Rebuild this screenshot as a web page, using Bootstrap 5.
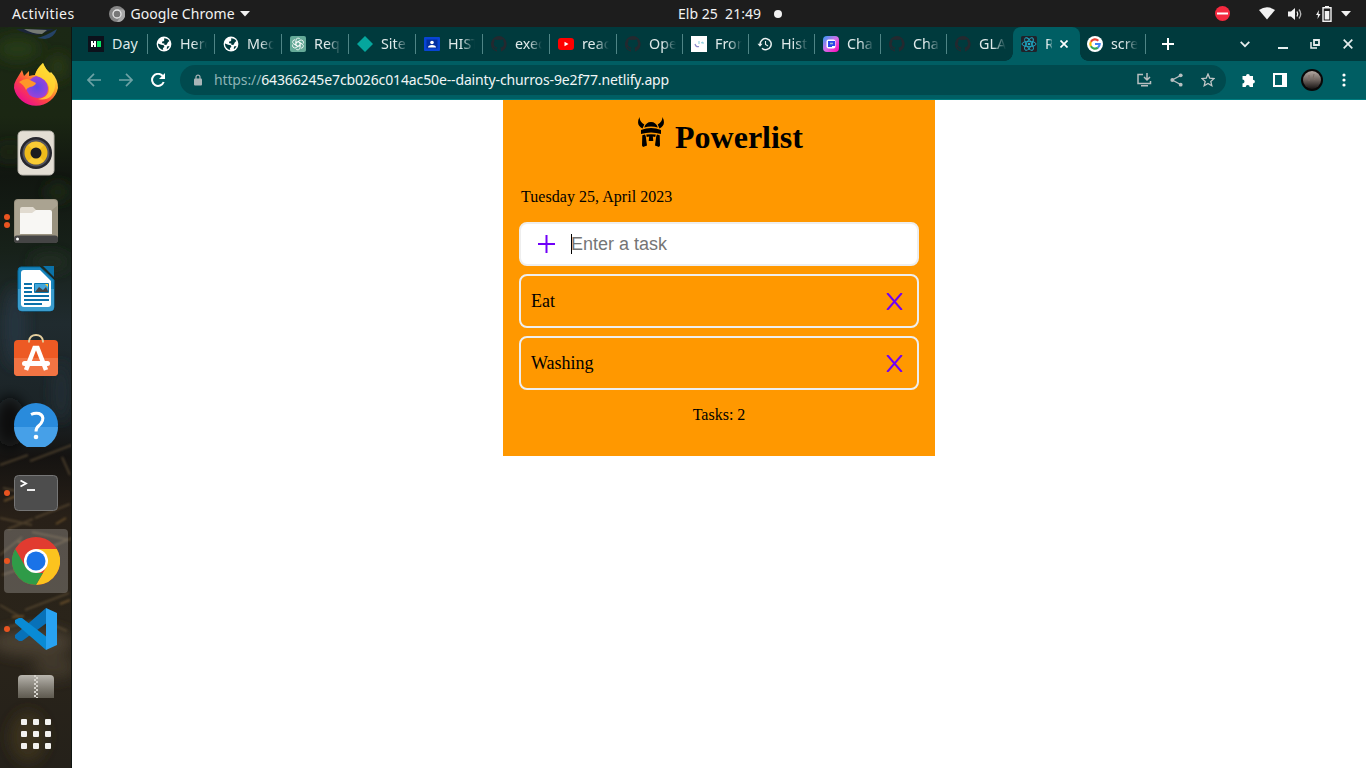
<!DOCTYPE html>
<html lang="en">
<head>
<meta charset="utf-8">
<meta name="viewport" content="width=device-width, initial-scale=1">
<title>Powerlist</title>
<link href="https://cdn.jsdelivr.net/npm/bootstrap@5.3.0/dist/css/bootstrap.min.css" rel="stylesheet">
<style>
  body { font-family: "Noto Sans", "Open Sans", sans-serif; font-size: 14px; line-height: 20px; background: #fff; }
  svg { display: block; flex: none; }
  .topbar { height: 27px; background: #1d1d1d; color: #f2f2f2; }
  .topbar-left { width: 678px; padding-left: 12px; }
  .topbar-clock { width: 105px; }
  .topbar-clock span { white-space: pre; letter-spacing: .02px; }
  .dock { width: 72px; background: #16180f; overflow: hidden; }
  .dock-photo { position: absolute; left: 0; top: 0; }
  .dock-item { height: 68px; flex: none; }
  .dock-running::before { content: ""; position: absolute; left: 4px; top: 31px; width: 6px; height: 6px; border-radius: 50%; background: #e95420; }
  .dock-double::before { top: 27px; box-shadow: 0 8px 0 #e95420; }
  .dock-focus { width: 64px; height: 64px; border-radius: 4px; background: rgba(255,255,255,.22); }
  .strip { background: #003a3d; height: 34px; padding-left: 9px; color: #dfeaea; font-size: 14.3px; }
  .tab-cell { width: 66px; height: 34px; padding-left: 8px; flex: none; }
  .tab-cell:nth-child(-n+8) { width: 67px; }
  .tab-cell:first-child { padding-left: 7px; }
  .tab-cell.sep { background: linear-gradient(#4f8586,#4f8586) right 0 center / 1px 20px no-repeat; }
  .tab-label { width: 27px; margin-left: 8px; overflow: hidden; white-space: nowrap; -webkit-mask-image: linear-gradient(90deg,#000 50%,transparent); mask-image: linear-gradient(90deg,#000 50%,transparent); }
  .tab-label.whole { width: auto; -webkit-mask-image: none; mask-image: none; }
  .tab-cell.tab-open { background: #005e63; border-radius: 8px 8px 0 0; width: 67px; }
  .tab-open .tab-label { width: 7px; -webkit-mask-image: linear-gradient(90deg,#000 40%,rgba(0,0,0,.3)); mask-image: linear-gradient(90deg,#000 40%,rgba(0,0,0,.3)); }
  .tab-open::before, .tab-open::after { content: ""; position: absolute; bottom: 0; width: 8px; height: 8px; }
  .tab-open::before { left: -8px; background: radial-gradient(circle at 0 0, transparent 7.5px, #005e63 8px); }
  .tab-open::after { right: -8px; background: radial-gradient(circle at 100% 0, transparent 7.5px, #005e63 8px); }
  .toolbar { height: 39px; background: #005e63; border-bottom: 1px solid #007c80; padding: 0 6px; }
  .slot { width: 32px; height: 30px; flex: none; display: flex; align-items: center; justify-content: center; }
  .omnibox { height: 30px; background: #004a4e; border-radius: 15px; margin: 0 6px; padding: 0 2px; color: #f1f6f6; white-space: nowrap; }
  .url-text { letter-spacing: -.13px; }
  .url-text span { color: #8db3b5; }
  .app-panel { width: 432px; height: 356px; background: #ff9800; color: #000; font-family: "Liberation Serif", serif; padding: 0 16px; }
  .app-title { font-size: 32px; font-weight: 700; line-height: 37px; margin: 2px 0 0; }
  .app-head { height: 74px; padding: 17px 0 0 3px; }
  .app-date { font-size: 16px; line-height: 18px; margin: 14px 0 16px 2px; letter-spacing: .04px; }
  .entry { height: 44px; border: 2px solid #eee; border-radius: 8px; background: #fff; padding-left: 17px; }
  .entry input { border: 0; outline: 0; padding: 0; width: 320px; margin-left: -1px; font: 18px "Liberation Sans", sans-serif; color: #000; background: transparent; }
  .entry input::placeholder { color: #757575; opacity: 1; }
  .text-caret { width: 1px; height: 20px; background: #000; margin-left: 16px; }
  .task { height: 54px; border: 2px solid #eee; border-radius: 8px; margin-top: 8px; padding: 0 14px 0 10px; font-size: 18px; }
  .tally { font-size: 16px; line-height: 18px; margin-top: 16px; }
</style>
</head>
<body class="vh-100 overflow-hidden d-flex flex-column">
<svg width="0" height="0" class="position-absolute">
  <defs>
    <symbol id="cat" viewBox="0 0 16 16"><path fill="#24292f" d="M8 0a8 8 0 0 0-2.5 15.600c.4.100.5-.2.5-.4v-1.500c-2 .4-2.600-.5-2.800-1-.1-.2-.5-.9-.8-1.100-.3-.2-.7-.6 0-.6.600 0 1.100.6 1.200.8.700 1.200 1.900.9 2.300.7.100-.5.300-.9.500-1.100-1.800-.2-3.600-.9-3.600-4 0-.9.300-1.600.8-2.100-.1-.2-.4-1 .1-2.100 0 0 .7-.2 2.200.8a7.500 7.500 0 0 1 4 0c1.500-1 2.200-.8 2.200-.8.500 1.100.200 1.900.100 2.100.500.600.800 1.300.800 2.100 0 3.100-1.900 3.800-3.600 4 .3.200.5.700.5 1.500v2.200c0 .2.100.5.500.4A8 8 0 0 0 8 0Z"/></symbol>
    <symbol id="globe" viewBox="0 0 16 16"><circle cx="8" cy="8" r="7.400" fill="#fff"/><path fill="#003a3d" d="M8.200 2.200c2.300 0 4 1 5.200 2.800l-1.500 1.200-1.300 2.600-2.100.3-.2-1.600-2-.3-.4-1.500 2.200-.8.100-1.600zM2 7.400l3.200 1.300 2.600.6.600 1.600-1.500 1 .3 1.900C4.200 13.300 1.900 11 2 7.400zM11 10.500l2.500-.6c-.6 1.600-1.500 2.500-2.700 3.200z"/></symbol>
    <symbol id="cross" viewBox="0 0 17 17"><path d="M1.200 0 15.800 17M15.800 0 1.200 17" stroke="#7000f8" stroke-width="2" fill="none"/></symbol>
  </defs>
</svg>

<header class="topbar d-flex align-items-center flex-shrink-0">
  <div class="topbar-left d-flex align-items-center flex-shrink-0">
    <span style="letter-spacing:.42px">Activities</span>
    <svg width="16" height="16" viewBox="0 0 16 16" style="margin-left:34px"><circle cx="8" cy="8" r="8" fill="#858585"/><path d="M8 3.500H15A8 8 0 0 1 8 16l3.500-5.500z" fill="#aaa"/><circle cx="8" cy="8" r="4" fill="#777" stroke="#e8e8e8" stroke-width="1.300"/></svg>
    <span style="margin-left:6px;letter-spacing:.06px">Google Chrome</span>
    <svg width="10" height="6" viewBox="0 0 10 6" style="margin-left:5px"><path d="M0 0h10L5 5.500z" fill="#f2f2f2"/></svg>
  </div>
  <div class="topbar-clock d-flex align-items-center flex-shrink-0"><span>Elb 25  21:49</span><svg class="ms-auto" width="8" height="8" style="margin-right:1px"><circle cx="4" cy="4" r="4" fill="#f2f2f2"/></svg></div>
  <div class="flex-grow-1 d-flex align-items-center justify-content-end" style="padding-right:15px">
    <svg width="15" height="15"><circle cx="7.500" cy="7.500" r="7.500" fill="#f5293f"/><path d="M2 7.500h11" stroke="#fff" stroke-width="2"/></svg>
    <svg width="16" height="13" viewBox="0 0 16 13" style="margin-left:29px"><path d="M0 3Q8-2.500 16 3L8 12.500z" fill="#f2f2f2"/></svg>
    <svg width="16" height="14" viewBox="0 0 16 14" style="margin-left:13px"><path d="M0 4.500h3L7 1v12L3 9.500H0z" fill="#f2f2f2"/><path d="M9 4.500q1.500 2.500 0 5" stroke="#f2f2f2" fill="none" stroke-width="1.300"/><path d="M11 2.500q3.500 4.500 0 9" stroke="#b5b5b5" fill="none" stroke-width="1.300"/></svg>
    <svg width="16" height="16" viewBox="0 0 16 16" style="margin-left:12px"><path d="M3 4 0 9h2l-.5 4L4.500 8h-2z" fill="#f2f2f2"/><path d="M9 0h4v2H9z" fill="#f2f2f2"/><path d="M7 1.700h8v13.600H7z" fill="none" stroke="#f2f2f2" stroke-width="1.400"/><path d="M8.700 5h4.600v8.500H8.700z" fill="#f2f2f2"/></svg>
    <svg width="10" height="6" viewBox="0 0 10 6" style="margin-left:9px"><path d="M0 0h10L5 5.500z" fill="#f2f2f2"/></svg>
  </div>
</header>

<div class="d-flex flex-grow-1 overflow-hidden">
<nav class="dock position-relative d-flex flex-column align-items-center flex-shrink-0">
  <svg class="dock-photo" width="72" height="741" viewBox="0 0 72 741">
    <defs><linearGradient id="ph" x2="0" y2="1"><stop stop-color="#1b2815"/><stop offset=".12" stop-color="#1b2713"/><stop offset=".2" stop-color="#111610"/><stop offset=".3" stop-color="#172119"/><stop offset=".4" stop-color="#202b2f"/><stop offset=".52" stop-color="#1b2326"/><stop offset=".58" stop-color="#151311"/><stop offset=".66" stop-color="#282018"/><stop offset=".8" stop-color="#2a241a"/><stop offset="1" stop-color="#25211a"/></linearGradient><filter id="soft" x="-30%" width="160%"><feGaussianBlur stdDeviation="7"/></filter><filter id="soft2"><feGaussianBlur stdDeviation=".9"/></filter></defs>
    <path fill="url(#ph)" d="M0 0h72v741H0z"/>
    <g filter="url(#soft)"><ellipse cx="18" cy="22" rx="22" ry="12" fill="#263a12"/><ellipse cx="58" cy="40" rx="10" ry="13" fill="#293a14"/><ellipse cx="10" cy="125" rx="16" ry="8" fill="#1c2819"/><ellipse cx="58" cy="165" rx="13" ry="9" fill="#1c2a18"/><ellipse cx="50" cy="235" rx="20" ry="9" fill="#202e20"/><ellipse cx="15" cy="300" rx="10" ry="40" fill="#263640"/><ellipse cx="61" cy="365" rx="8" ry="30" fill="#232f34"/><ellipse cx="10" cy="395" rx="15" ry="25" fill="#0f1011"/><ellipse cx="32" cy="615" rx="42" ry="14" fill="#4a4030"/><ellipse cx="55" cy="640" rx="22" ry="12" fill="#40382a"/><ellipse cx="28" cy="710" rx="18" ry="25" fill="#3b321a"/></g>
    <g filter="url(#soft2)" fill="none" stroke="#655338" stroke-width="2" opacity=".6"><path d="M0 438l28-10M30 434l42-16M3 461l26 6M0 491l32 7M35 491l35-14M8 502l25-10M0 528l22-18M32 505l38 8M44 523l28-12M62 430l8 18M2 548l30-10M0 578l19 11M25 583l44-17M42 593l25 11M8 600l24-6"/><path stroke="#8c6835" d="M18 515l16 3M4 474l12-5M56 497l10-6M60 577l10-4M12 590l12-1"/></g>
    <path fill="#101511" d="M71 0h1v741h-1z"/>
    <path d="M16 2q8 5 22 6l16-6z" fill="#1b2538"/><path d="M24 2l23 1-5 4q-10 0-18-5z" fill="#757a74"/><path d="M37 11q9-2 20-9-3 9-12 10z" fill="#254367"/>
  </svg>
  <div class="position-relative flex-shrink-0" style="height:24px"></div>
  <div class="dock-item w-100 position-relative d-flex align-items-center justify-content-center">
    <svg width="46" height="48" viewBox="0 0 46 48"><defs><linearGradient id="ff" x1=".85" y1=".1" x2=".2" y2=".9"><stop stop-color="#fff44f"/><stop offset=".35" stop-color="#ffa52a"/><stop offset=".65" stop-color="#ff4740"/><stop offset="1" stop-color="#ec108c"/></linearGradient><radialGradient id="fp"><stop stop-color="#5a4ae8"/><stop offset="1" stop-color="#9b42d8"/></radialGradient></defs><path fill="url(#ff)" d="M3 19 9 9l2 6 5-5v5q4-1 6-1c1-5 5-9 8-12q3 7 7 10l1-1q7 7 7 16A22.500 22.500 0 0 1 1 27q0-5 2-8z"/><path d="M23 15q11 2 12 12 0 10-11 10-10-1-11-11 3-9 10-11z" fill="url(#fp)"/><path d="M6 21q7-5 11-2l6 3q-1 3-6 4-3 1-4 3-2-5-7-8z" fill="#ff9729"/><path d="M22 14q3-8 8-12 2 6 7 10 6 5 5 14-3 15-17 12 12-2 11-12-2-8-14-12z" fill="#ffd92f" opacity=".8"/></svg>
  </div>
  <div class="dock-item w-100 position-relative d-flex align-items-center justify-content-center">
    <svg width="38" height="46" viewBox="0 0 38 46"><rect x="1" y="1" width="36" height="44" rx="4.500" fill="#e3ded4" stroke="#b9b5ad"/><circle cx="19" cy="23" r="16" fill="#26262d"/><circle cx="19" cy="23" r="13.500" fill="#55555e"/><circle cx="19" cy="23" r="11.500" fill="#efbb1b"/><path d="M11 15a11.500 11.500 0 0 1 16 0l-8 8zM11 31a11.500 11.500 0 0 0 16 0l-8-8z" fill="#ffd648" opacity=".6"/><circle cx="19" cy="23" r="5.500" fill="#1d1d20"/></svg>
  </div>
  <div class="dock-item dock-running dock-double w-100 position-relative d-flex align-items-center justify-content-center">
    <svg width="44" height="44" viewBox="0 0 44 44"><rect width="44" height="44" rx="4" fill="#9a9380"/><path d="M4 1h36q3 0 3 3v3L5 37H1V4q0-3 3-3z" fill="#aaa391"/><path d="M6 10q0-2 2-2h11l3 3h14v23H6z" fill="#e1dbd0"/><path d="M6 14h12l4-3h14q2 0 2 2v22H6z" fill="#f8f7f4"/><rect y="36.500" width="44" height="7.500" rx="3" fill="#454545"/><circle cx="3.500" cy="40" r="1.500" fill="#fff"/></svg>
  </div>
  <div class="dock-item w-100 position-relative d-flex align-items-center justify-content-center">
    <svg width="38" height="46" viewBox="0 0 38 46"><path d="M4 1h19l14 13v27q0 4-4 4H5q-4 0-4-4V5q0-4 3-4z" fill="#1784bc" stroke="#056b9d"/><path d="M1 23h36v18q0 4-4 4H5q-4 0-4-4z" fill="#3a9ccd"/><path d="M7 4h16l11 11v23q0 3-3 3H7q-3 0-3-3V7q0-3 3-3z" fill="#fff"/><path d="M26 0h11v11z" fill="#0b72a7"/><path d="M7 18h8M7 22h8M7 26h8M7 30h25M7 34h25M7 38h18" stroke="#0b70a9" stroke-width="2"/><path d="M17.500 17.500h14v9h-14z" fill="#42a6db" stroke="#0877ae"/><path d="M18 26l4-5 4 3 3-3 2.500 5z" fill="#444"/><path d="M28 18h3v3z" fill="#ffcf35"/></svg>
  </div>
  <div class="dock-item w-100 position-relative d-flex align-items-center justify-content-center">
    <svg width="44" height="44" viewBox="0 0 44 44" style="margin-top:-4px"><rect y="7" width="44" height="36" rx="4" fill="#ed5a24"/><path d="M0 25h44v14q0 4-4 4H4q-4 0-4-4z" fill="#f27443"/><path d="M15 9.500V8q1-6 7-6t7 6v1.500" fill="none" stroke="#e5cf9e" stroke-width="1.800"/><path d="M12 37l8.500-22h3L32 37" fill="none" stroke="#fff" stroke-width="4.500"/><rect x="8" y="28" width="28" height="5" rx="2.500" fill="#fff"/></svg>
  </div>
  <div class="dock-item w-100 position-relative d-flex align-items-center justify-content-center">
    <svg width="44" height="44" viewBox="0 0 44 44"><circle cx="22" cy="22" r="22" fill="#298bdc"/><path d="M0 24h44a22 22 0 0 1-44 0z" fill="#46a0e8"/><path d="M17 11.500q4-2 8-1 5 2 3.500 7-1 3-4 5.500-2.500 2-2.500 5.500" fill="none" stroke="#fff" stroke-width="3"/><circle cx="22" cy="34" r="2.300" fill="#fff"/></svg>
  </div>
  <div class="dock-item dock-running w-100 position-relative d-flex align-items-center justify-content-center">
    <svg width="44" height="36" viewBox="0 0 44 36"><rect x=".5" y=".5" width="43" height="35" rx="4" fill="#4d4d4d" stroke="#767676"/><path d="M6.500 5.500 12 8.500l-5.500 3" stroke="#fff" stroke-width="1.800" fill="none"/><path d="M13 15h8" stroke="#fff" stroke-width="1.800"/></svg>
  </div>
  <div class="dock-item dock-running w-100 position-relative d-flex align-items-center justify-content-center">
    <div class="dock-focus d-flex align-items-center justify-content-center"><svg width="48" height="48" viewBox="0 0 48 48"><circle cx="24" cy="24" r="24" fill="#e13b30"/><path d="M24 12h20.800A24 24 0 0 1 24 48l10.400-18z" fill="#fcc31e"/><path d="M3.200 12 13.600 30 24 36h7l-7 12A24 24 0 0 1 3.200 12z" fill="#2f9b48"/><circle cx="24" cy="24" r="12" fill="#fff"/><circle cx="24" cy="24" r="9.500" fill="#1a73e8"/></svg></div>
  </div>
  <div class="dock-item dock-running w-100 position-relative d-flex align-items-center justify-content-center">
    <svg width="42" height="42" viewBox="0 0 42 42"><path d="M31 0 0 27v3l4 3h3L33 14z" fill="#0871b8"/><path d="M0 15v-3l4-2h3l26 20-2 12z" fill="#098bd5"/><path d="M31 0l11 5v32l-11 5z" fill="#28a2f1"/></svg>
  </div>
  <div class="position-relative flex-shrink-0" style="padding-top:12px;height:55px">
    <svg width="36" height="23" viewBox="0 0 36 23"><defs><linearGradient id="zg" x2="0" y2="1"><stop stop-color="#b9b6af"/><stop offset="1" stop-color="#716d62" stop-opacity=".75"/></linearGradient></defs><path d="M4 0h28q4 0 4 4v19H0V4q0-4 4-4z" fill="url(#zg)"/><path d="M17 0v23" stroke="#d5d2cb" stroke-width="2" stroke-dasharray="2"/><path d="M19 2v21" stroke="#d5d2cb" stroke-width="2" stroke-dasharray="2"/></svg>
  </div>
  <svg class="position-relative" width="30" height="30" viewBox="0 0 30 30" fill="#f3f2ef" style="margin-top:1px"><g id="dots3"><rect width="6" height="6" rx="1"/><rect x="12" width="6" height="6" rx="1"/><rect x="24" width="6" height="6" rx="1"/></g><use href="#dots3" y="12"/><use href="#dots3" y="24"/></svg>
</nav>

<div class="d-flex flex-column flex-grow-1" style="min-width:0">
  <div class="strip d-flex align-items-center flex-shrink-0">
    <div class="tab-cell sep d-flex align-items-center"><svg width="16" height="16"><path fill="#0c111b" d="M0 0h16v16H0z"/><path d="M3 5h2v2h1V5h2v6H6V9H5v2H3z" fill="#fff"/><path d="M9 5h4v6H9z" fill="#08e563"/></svg><span class="tab-label whole">Day</span></div>
    <div class="tab-cell sep d-flex align-items-center"><svg width="16" height="16"><use href="#globe"/></svg><span class="tab-label">Hero</span></div>
    <div class="tab-cell sep d-flex align-items-center"><svg width="16" height="16"><use href="#globe"/></svg><span class="tab-label">Med</span></div>
    <div class="tab-cell sep d-flex align-items-center"><svg width="16" height="16" viewBox="0 0 16 16"><rect width="16" height="16" rx="2" fill="#65aa98"/><g fill="none" stroke="#fff" stroke-width=".8"><path id="knot" d="M6 8.500V4.200a2.200 2.200 0 0 1 4.200-.8M6 6.800l3.500-2"/><use href="#knot" transform="rotate(60 8 8)"/><use href="#knot" transform="rotate(120 8 8)"/><use href="#knot" transform="rotate(180 8 8)"/><use href="#knot" transform="rotate(240 8 8)"/><use href="#knot" transform="rotate(300 8 8)"/></g></svg><span class="tab-label">Requ</span></div>
    <div class="tab-cell sep d-flex align-items-center"><svg width="16" height="16"><path d="M8 0l8 8-8 8-8-8z" fill="#05a69d"/></svg><span class="tab-label">Site</span></div>
    <div class="tab-cell sep d-flex align-items-center"><svg width="16" height="16"><rect y="1" width="16" height="14" rx="1" fill="#0844d4"/><path d="M2.500 3.500h11v9h-11z" fill="#022fa0"/><circle cx="8" cy="6.500" r="1.800" fill="#fff"/><path d="M4 11.500q0-2.500 4-2.500t4 2.500z" fill="#fff"/></svg><span class="tab-label">HIST</span></div>
    <div class="tab-cell sep d-flex align-items-center"><svg width="16" height="16"><use href="#cat"/></svg><span class="tab-label">exec</span></div>
    <div class="tab-cell sep d-flex align-items-center"><svg width="16" height="16"><rect y="2" width="16" height="12" rx="3" fill="#f00"/><path d="M6.500 5.700 10.500 8l-4 2.300z" fill="#fff"/></svg><span class="tab-label">reac</span></div>
    <div class="tab-cell sep d-flex align-items-center"><svg width="16" height="16"><use href="#cat"/></svg><span class="tab-label">Ope</span></div>
    <div class="tab-cell sep d-flex align-items-center"><svg width="16" height="16"><path fill="#fff" d="M0 0h16v16H0z"/><path d="M4 8q1 3.500 4 2.500" fill="none" stroke="#8b87c8" stroke-width="1.200"/><path d="M8 5v3M10 7l2-1M12 6v2" stroke="#83cadb" fill="none"/></svg><span class="tab-label">Fron</span></div>
    <div class="tab-cell sep d-flex align-items-center"><svg width="16" height="16" viewBox="0 0 16 16"><path d="M3.200 8.500A5.500 5.500 0 1 1 5 12.200" fill="none" stroke="#e8f0f0" stroke-width="1.500"/><path d="M8.500 5v3.500l2.500 1.500" stroke="#e8f0f0" stroke-width="1.100" fill="none"/><path d="M.5 7.800h5L3 10.800z" fill="#e8f0f0"/></svg><span class="tab-label">Hist</span></div>
    <div class="tab-cell sep d-flex align-items-center"><svg width="16" height="16"><defs><linearGradient id="pk" x2="1" y2="1"><stop stop-color="#309cf5"/><stop offset=".5" stop-color="#d56de8"/><stop offset="1" stop-color="#ff00b4"/></linearGradient></defs><rect width="16" height="16" rx="4" fill="url(#pk)"/><rect x="3.500" y="3.500" width="9" height="9" rx="2" fill="#fff"/><path d="M5 5h7v5H9v1H5z" fill="#2c49e8"/><path d="M7 7.500h3" stroke="#9bc" stroke-width="1.500"/></svg><span class="tab-label">Cha</span></div>
    <div class="tab-cell sep d-flex align-items-center"><svg width="16" height="16"><use href="#cat"/></svg><span class="tab-label">Cha</span></div>
    <div class="tab-cell d-flex align-items-center"><svg width="16" height="16"><use href="#cat"/></svg><span class="tab-label">GLA</span></div>
    <div class="tab-cell tab-open position-relative d-flex align-items-center"><svg width="16" height="16" viewBox="0 0 16 16"><rect width="16" height="16" rx="1.500" fill="#20232a"/><g fill="none" stroke="#1faecb" stroke-width=".9"><ellipse cx="8" cy="8" rx="7" ry="2.700"/><ellipse cx="8" cy="8" rx="7" ry="2.700" transform="rotate(60 8 8)"/><ellipse cx="8" cy="8" rx="7" ry="2.700" transform="rotate(120 8 8)"/></g><circle cx="8" cy="8" r="1.300" fill="#1faecb"/></svg><span class="tab-label">R</span><svg width="8" height="8" style="margin-left:8px"><path d="M.5.5l7 7M7.500.5l-7 7" stroke="#fff" stroke-width="1.700"/></svg></div>
    <div class="tab-cell sep d-flex align-items-center" style="padding-left:7px"><svg width="16" height="16" viewBox="0 0 16 16"><circle cx="8" cy="8" r="8" fill="#fff"/><g fill="none" stroke-width="2.200"><path d="M11.300 4.700A4.700 4.700 0 0 0 3.900 5.700" stroke="#ea4335"/><path d="M3.900 5.700a4.700 4.700 0 0 0 0 4.600" stroke="#fbbc05"/><path d="M3.900 10.300a4.700 4.700 0 0 0 7 1.300" stroke="#34a853"/><path d="M10.900 11.600A4.700 4.700 0 0 0 12.700 8H8" stroke="#4285f4"/></g></svg><span class="tab-label">scre</span></div>
    <svg width="12" height="12" style="margin-left:16px"><path d="M6 0v12M0 6h12" stroke="#fff" stroke-width="2"/></svg>
    <div class="d-flex align-items-center ms-auto" style="padding-right:13px">
      <svg width="10" height="7" viewBox="0 0 10 7"><path d="M.7.9 5 5.200 9.300.9" fill="none" stroke="#e6eeee" stroke-width="1.700"/></svg>
      <svg width="10" height="10" style="margin-left:28px"><path d="M0 9h10" stroke="#e6eeee" stroke-width="2"/></svg>
      <svg width="10" height="10" viewBox="0 0 10 10" style="margin-left:22px"><path d="M4 1h5v5H4z" fill="none" stroke="#e6eeee" stroke-width="1.800"/><path d="M1 3v6h6" fill="none" stroke="#e6eeee" stroke-width="1.500"/></svg>
      <svg width="10" height="10" style="margin-left:23px"><path d="M.7.700l8.600 8.600M9.300.7.700 9.300" stroke="#e6eeee" stroke-width="1.700"/></svg>
    </div>
  </div>

  <div class="toolbar d-flex align-items-center flex-shrink-0">
    <span class="slot"><svg width="14" height="14" viewBox="0 0 14 14"><path d="M14 7H1.500M7 .8.900 7 7 13.200" fill="none" stroke="#6da2a5" stroke-width="1.700"/></svg></span>
    <span class="slot"><svg width="14" height="14" viewBox="0 0 14 14"><path d="M0 7h12.500M7 .8 13.100 7 7 13.200" fill="none" stroke="#6da2a5" stroke-width="1.700"/></svg></span>
    <span class="slot"><svg width="14" height="14" viewBox="0 0 14 14"><path d="M12.700 9A6 6 0 1 1 11.500 2.800L13 4.500" fill="none" stroke="#fff" stroke-width="2"/><path d="M14 0v6H8z" fill="#fff"/></svg></span>
    <div class="omnibox d-flex align-items-center flex-grow-1">
      <span class="slot"><svg width="8" height="12" viewBox="0 0 8 12"><path d="M2 5V3.200a2 2 0 0 1 4 0V5" fill="none" stroke="#a9b5b7" stroke-width="1.200"/><rect y="4.500" width="8" height="7" rx="1" fill="#a9b5b7"/></svg></span>
      <span class="url-text"><span>https://</span>64366245e7cb026c014ac50e--dainty-churros-9e2f77.netlify.app</span>
      <span class="slot ms-auto"><svg width="15" height="14" viewBox="0 0 15 14"><path d="M6 1.500H1v9h12.500V8M4 12.800h7" fill="none" stroke="#b8bfc0" stroke-width="1.500"/><path d="M10 0v6M7 4l3 3 3-3" fill="none" stroke="#b8bfc0" stroke-width="1.500"/></svg></span>
      <span class="slot"><svg width="13" height="14" viewBox="0 0 13 14"><path d="M11 2.300 2.300 7l8.700 4.700" fill="none" stroke="#b8bfc0" stroke-width="1.300"/><g fill="#b8bfc0"><circle cx="10.700" cy="2.300" r="1.900"/><circle cx="2.300" cy="7" r="1.900"/><circle cx="10.700" cy="11.700" r="1.900"/></g></svg></span>
      <span class="slot"><svg width="14" height="14" viewBox="0 0 14 14"><path d="M7 1l1.700 4.100 4.400.4-3.300 2.900 1 4.300L7 10.400l-3.800 2.300 1-4.300L.9 5.500l4.400-.4z" fill="none" stroke="#c2c7c7" stroke-width="1.300"/></svg></span>
    </div>
    <span class="slot"><svg width="15" height="15" viewBox="0 0 15 15"><path d="M1.500 3H5a1.900 1.900 0 1 1 3.800 0H12v3.700a1.900 1.900 0 1 1 0 3.800V14H8.700a2 2 0 1 0-4 0H1.500v-3.500a2 2 0 0 0 0-4z" fill="#fff"/></svg></span>
    <span class="slot"><svg width="14" height="14"><path d="M1 1h12v12H1z" fill="none" stroke="#fff" stroke-width="2"/><path d="M9 1h4v12H9z" fill="#fff"/></svg></span>
    <span class="slot"><svg width="22" height="22"><defs><linearGradient id="av" x2="0" y2="1"><stop stop-color="#b4a9a3"/><stop offset=".5" stop-color="#6d635e"/><stop offset="1" stop-color="#171312"/></linearGradient></defs><circle cx="11" cy="11" r="11" fill="#080808"/><circle cx="11" cy="11" r="9" fill="url(#av)"/><path d="M8 6v6M13 5q-2 4 1 6" stroke="#7a6c65" stroke-width="1" fill="none"/></svg></span>
    <span class="slot"><svg width="4" height="14"><g fill="#fff"><circle cx="2" cy="2" r="1.600"/><circle cx="2" cy="7" r="1.600"/><circle cx="2" cy="12" r="1.600"/></g></svg></span>
  </div>

  <main class="flex-grow-1 d-flex justify-content-center align-items-start">
    <section class="app-panel">
      <div class="app-head d-flex justify-content-center">
        <svg width="26" height="30" viewBox="0 0 26 30" style="margin-right:11px"><path d="M1.500 0Q1.500 5 6.300 7.500L4.500 11.500Q-2.500 8 1.500 0zM24.500 0Q24.500 5 19.700 7.500l1.800 4Q28.500 8 24.500 0z"/><path d="M6.200 10.500Q8 5 13 5t6.800 5.500Q13 8.500 6.200 10.500z"/><path d="M3 13q10-4 20 0v4q-10-3.200-20 0z"/><path d="M4.300 18.300 7 17.600l.8 2L9 28.500 5 30 4 28.500zM21.700 18.300 19 17.600l-.8 2L17 28.500 21 30l1-1.500z"/><path d="M8.200 17.500q4.800-.7 9.600 0l-.6 2.500-2.400-.5.500 4.500H10.700l.5-4.500-2.400.5z"/></svg>
        <h1 class="app-title">Powerlist</h1>
      </div>
      <p class="app-date">Tuesday 25, April 2023</p>
      <form class="entry d-flex align-items-center" onsubmit="return false">
        <svg width="17" height="18"><path d="M8.500 0v18M0 9h17" stroke="#7000f8" stroke-width="2"/></svg>
        <span class="text-caret"></span><input type="text" placeholder="Enter a task" aria-label="Enter a task">
      </form>
      <div class="task d-flex align-items-center justify-content-between"><span>Eat</span><svg width="17" height="17"><use href="#cross"/></svg></div>
      <div class="task d-flex align-items-center justify-content-between"><span>Washing</span><svg width="17" height="17"><use href="#cross"/></svg></div>
      <p class="tally text-center mb-0">Tasks: 2</p>
    </section>
  </main>
</div>
</div>
<script src="https://cdn.jsdelivr.net/npm/bootstrap@5.3.0/dist/js/bootstrap.bundle.min.js"></script>
</body>
</html>
